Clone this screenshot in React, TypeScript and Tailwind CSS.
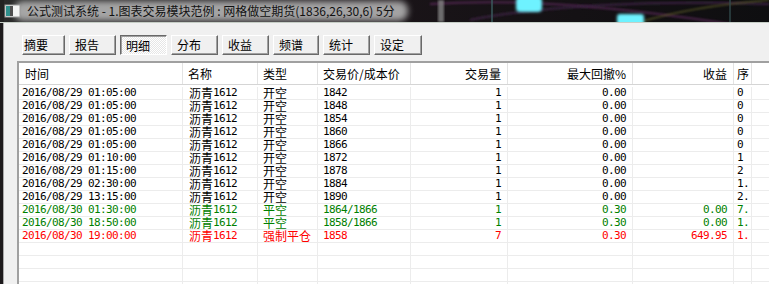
import React from "react";

type Row = {
  t: string;
  name: string;
  type: string;
  price: string;
  qty: string;
  dd: string;
  pnl: string;
  seq: string;
  c: "k" | "g" | "r";
};

const rows: Row[] = [
  { t: "2016/08/29 01:05:00", name: "1612", type: "开空", price: "1842", qty: "1", dd: "0.00", pnl: "", seq: "0", c: "k" },
  { t: "2016/08/29 01:05:00", name: "1612", type: "开空", price: "1848", qty: "1", dd: "0.00", pnl: "", seq: "0", c: "k" },
  { t: "2016/08/29 01:05:00", name: "1612", type: "开空", price: "1854", qty: "1", dd: "0.00", pnl: "", seq: "0", c: "k" },
  { t: "2016/08/29 01:05:00", name: "1612", type: "开空", price: "1860", qty: "1", dd: "0.00", pnl: "", seq: "0", c: "k" },
  { t: "2016/08/29 01:05:00", name: "1612", type: "开空", price: "1866", qty: "1", dd: "0.00", pnl: "", seq: "0", c: "k" },
  { t: "2016/08/29 01:10:00", name: "1612", type: "开空", price: "1872", qty: "1", dd: "0.00", pnl: "", seq: "1", c: "k" },
  { t: "2016/08/29 01:15:00", name: "1612", type: "开空", price: "1878", qty: "1", dd: "0.00", pnl: "", seq: "2", c: "k" },
  { t: "2016/08/29 02:30:00", name: "1612", type: "开空", price: "1884", qty: "1", dd: "0.00", pnl: "", seq: "1.", c: "k" },
  { t: "2016/08/29 13:15:00", name: "1612", type: "开空", price: "1890", qty: "1", dd: "0.00", pnl: "", seq: "2.", c: "k" },
  { t: "2016/08/30 01:30:00", name: "1612", type: "平空", price: "1864/1866", qty: "1", dd: "0.30", pnl: "0.00", seq: "7.", c: "g" },
  { t: "2016/08/30 18:50:00", name: "1612", type: "平空", price: "1858/1866", qty: "1", dd: "0.30", pnl: "0.00", seq: "1.", c: "g" },
  { t: "2016/08/30 19:00:00", name: "1612", type: "强制平仓", price: "1858", qty: "7", dd: "0.30", pnl: "649.95", seq: "1.", c: "r" },
];

const GRID = "grid grid-cols-[164px_75px_60px_93px_97px_125px_101px_18px_1fr]";
const CJK = "font-['Noto_Sans_CJK_SC',sans-serif] text-[12px]";
const MONO = "font-['DejaVu_Sans_Mono',monospace] text-[11px] tracking-[-0.62px]";
const VL = "border-r border-[#ececec] overflow-hidden whitespace-nowrap flex items-center leading-[12px]";
const HL = "border-r border-[#e3e3e3] overflow-hidden whitespace-nowrap flex items-center h-[21px] leading-[14px]";

const buttons = [
  { label: "摘要", w: "w-[43px] pl-[1px]" },
  { label: "报告", w: "w-[47px] pl-[5px]" },
  { label: "明细", w: "w-[47px] pl-[5px]", pressed: true },
  { label: "分布", w: "w-[47px] pl-[5px]" },
  { label: "收益", w: "w-[47px] pl-[5px]" },
  { label: "频谱", w: "w-[46px] pl-[5px]" },
  { label: "统计", w: "w-[47px] pl-[5px]" },
  { label: "设定", w: "w-[48px] pl-[5px]" },
];

function colorOf(c: Row["c"]) {
  if (c === "g") return "text-[#008000]";
  if (c === "r") return "text-[#ff0000]";
  return "text-black";
}

function TitleBar() {
  return (
    <div className="relative h-[22px] shrink-0 overflow-hidden">
      <svg className="absolute inset-0" width="769" height="22" viewBox="0 0 769 22">
        <defs>
          <filter id="b3" x="-20%" y="-50%" width="140%" height="200%">
            <feGaussianBlur stdDeviation="3" />
          </filter>
          <filter id="b2" x="-30%" y="-80%" width="160%" height="260%">
            <feGaussianBlur stdDeviation="1.6" />
          </filter>
          <filter id="b1">
            <feGaussianBlur stdDeviation="0.8" />
          </filter>
          <linearGradient id="bg" x1="0" y1="0" x2="1" y2="0">
            <stop offset="0" stopColor="#2a2a2a" />
            <stop offset="0.5" stopColor="#1a1418" />
            <stop offset="1" stopColor="#0e0e10" />
          </linearGradient>
        </defs>
        <rect width="769" height="22" fill="url(#bg)" />
        <path d="M430 4 C 520 -2, 620 6, 769 30" stroke="#5a2a58" strokeWidth="2" fill="none" filter="url(#b1)" opacity="0.8" />
        <path d="M470 20 C 540 6, 650 0, 769 4" stroke="#3a2440" strokeWidth="2" fill="none" filter="url(#b1)" />
        <path d="M640 22 C 680 10, 720 4, 769 0" stroke="#6a6a2a" strokeWidth="1.5" fill="none" filter="url(#b1)" opacity="0.7" />
        <rect x="438" y="0" width="6" height="22" fill="#8a8a8a" opacity="0.75" filter="url(#b1)" />
        <rect x="491" y="0" width="2" height="22" fill="#3b5d60" opacity="0.7" />
        <rect x="729" y="0" width="2" height="22" fill="#30484a" opacity="0.7" />
        <rect x="516" y="-3" width="26" height="15" rx="4" fill="#6ef2ff" filter="url(#b2)" />
        <rect x="617" y="14" width="27" height="12" rx="3" fill="#6ef2ff" filter="url(#b2)" />
        <rect x="14" y="1" width="394" height="20" rx="9" fill="#bcbcbc" opacity="0.85" filter="url(#b3)" />
        <rect x="0" y="0" width="4" height="22" fill="#222" />
        <g>
          <rect x="5" y="5" width="15" height="12" fill="#f4f4f4" stroke="#9a9a9a" strokeWidth="1" />
          <rect x="6" y="6" width="4" height="10" fill="#2f8f8c" />
          <rect x="10" y="6" width="3" height="10" fill="#505050" />
        </g>
      </svg>
      <div className={`relative h-full flex items-center pl-[27px] text-[#111] ${CJK} leading-[16px] whitespace-nowrap`}>
        公式测试系统 - 1.图表交易模块范例 : 网格做空期货(1836,26,30,6) 5分
      </div>
    </div>
  );
}

function Btn({ label, w, pressed }: { label: string; w: string; pressed?: boolean }) {
  const base = `h-[20px] flex items-center leading-[14px] ${w} ${CJK} text-black`;
  if (pressed) {
    return (
      <div
        className={`${base} pt-[1px] border border-t-[#696969] border-l-[#696969] border-r-white border-b-white shadow-[inset_1px_1px_0_#a0a0a0] bg-[#f7f7f7] bg-[repeating-conic-gradient(#ffffff_0%_25%,#e6e6e6_0%_50%)] bg-[length:2px_2px]`}
      >
        {label}
      </div>
    );
  }
  return (
    <div
      className={`${base} bg-[#f0f0f0] border border-t-white border-l-white border-r-[#696969] border-b-[#696969] shadow-[inset_-1px_-1px_0_#a0a0a0]`}
    >
      {label}
    </div>
  );
}

function Header() {
  return (
    <div className={`${GRID} border-b border-[#d5d5d5] bg-white text-black ${CJK}`}>
      <div className={`${HL} pl-[6px]`}>时间</div>
      <div className={`${HL} pl-[5px]`}>名称</div>
      <div className={`${HL} pl-[5px]`}>类型</div>
      <div className={`${HL} pl-[5px]`}>交易价/成本价</div>
      <div className={`${HL} justify-end pr-[6px]`}>交易量</div>
      <div className={`${HL} justify-end pr-[6px]`}>最大回撤%</div>
      <div className={`${HL} justify-end pr-[6px]`}>收益</div>
      <div className={`${HL} pl-[3px]`}>序</div>
      <div className="h-[21px]" />
    </div>
  );
}

function DataRow({ r, first }: { r: Row; first: boolean }) {
  const col = colorOf(r.c);
  const h = first ? "h-[15px] pt-[2px]" : "h-[13px]";
  return (
    <div className={`${GRID} ${h} border-b border-[#ececec] ${col}`}>
      <div className={`${VL} pl-[3px] ${MONO}`}>{r.t}</div>
      <div className={`${VL} pl-[6px]`}>
        <span className={CJK}>沥青</span>
        <span className={MONO}>{r.name}</span>
      </div>
      <div className={`${VL} pl-[5px] ${CJK}`}>{r.type}</div>
      <div className={`${VL} pl-[5px] ${MONO}`}>{r.price}</div>
      <div className={`${VL} justify-end pr-[6px] ${MONO}`}>{r.qty}</div>
      <div className={`${VL} justify-end pr-[6px] ${MONO}`}>{r.dd}</div>
      <div className={`${VL} justify-end pr-[6px] ${MONO}`}>{r.pnl}</div>
      <div className={`${VL} pl-[3px] ${MONO}`}>{r.seq}</div>
      <div />
    </div>
  );
}

function EmptyRow() {
  return (
    <div className={`${GRID} h-[13px] border-b border-[#ececec]`}>
      <div className={VL} />
      <div className={VL} />
      <div className={VL} />
      <div className={VL} />
      <div className={VL} />
      <div className={VL} />
      <div className={VL} />
      <div className={VL} />
      <div />
    </div>
  );
}

export default function App() {
  return (
    <div className="w-[769px] h-[284px] overflow-hidden flex flex-col bg-[#151515]">
      <TitleBar />
      <div className="h-px bg-[#c6cec6] shrink-0" />
      <div className="flex flex-1 min-h-0">
        <div className="w-[3px] shrink-0 bg-[#1d1a1c]" />
        <div className="flex-1 min-w-0 border-l border-[#a9a9a9] bg-[#f0f0f0] pt-[12px] flex flex-col">
          <div className="flex gap-[4px] pl-[18px] shrink-0">
            {buttons.map((b) => (
              <Btn key={b.label} label={b.label} w={b.w} pressed={b.pressed} />
            ))}
          </div>
          <div className="ml-[13px] mt-[6px] w-[780px] flex-1 min-h-0 border-l-2 border-t-2 border-[#a0a0a0] bg-white overflow-hidden">
            <Header />
            {rows.map((r, i) => (
              <DataRow key={i} r={r} first={i === 0} />
            ))}
            <EmptyRow />
            <EmptyRow />
            <EmptyRow />
            <EmptyRow />
          </div>
        </div>
      </div>
    </div>
  );
}
